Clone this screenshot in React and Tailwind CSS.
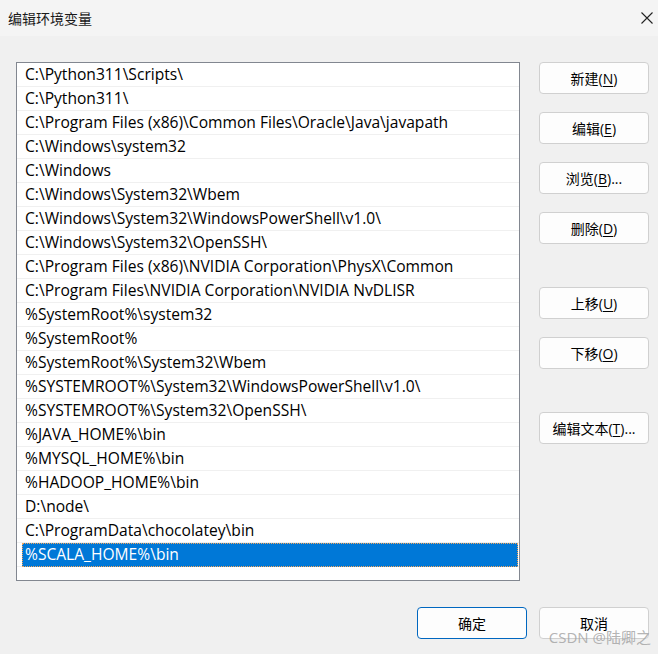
const paths = [
  "C:\\Python311\\Scripts\\",
  "C:\\Python311\\",
  "C:\\Program Files (x86)\\Common Files\\Oracle\\Java\\javapath",
  "C:\\Windows\\system32",
  "C:\\Windows",
  "C:\\Windows\\System32\\Wbem",
  "C:\\Windows\\System32\\WindowsPowerShell\\v1.0\\",
  "C:\\Windows\\System32\\OpenSSH\\",
  "C:\\Program Files (x86)\\NVIDIA Corporation\\PhysX\\Common",
  "C:\\Program Files\\NVIDIA Corporation\\NVIDIA NvDLISR",
  "%SystemRoot%\\system32",
  "%SystemRoot%",
  "%SystemRoot%\\System32\\Wbem",
  "%SYSTEMROOT%\\System32\\WindowsPowerShell\\v1.0\\",
  "%SYSTEMROOT%\\System32\\OpenSSH\\",
  "%JAVA_HOME%\\bin",
  "%MYSQL_HOME%\\bin",
  "%HADOOP_HOME%\\bin",
  "D:\\node\\",
  "C:\\ProgramData\\chocolatey\\bin",
  "%SCALA_HOME%\\bin",
]

const font = "font-['Open_Sans','Noto_Sans_CJK_SC',sans-serif]"

function Btn({ label, keyChar, dots, primary, className = "" }) {
  return (
    <button
      type="button"
      className={
        "flex h-[32px] w-[110px] items-center justify-center rounded-[4px] border bg-[#fdfdfd] text-[14px] text-black " +
        (primary ? "border-[#0067c0] " : "border-[#d0d0d0] ") +
        className
      }
    >
      {label}
      {keyChar && (
        <span>
          (<span className="underline underline-offset-2">{keyChar}</span>){dots ? "..." : ""}
        </span>
      )}
    </button>
  )
}

export default function App() {
  return (
    <div className={"relative h-[654px] w-[658px] overflow-hidden bg-[#f0f0f0] " + font}>
      <div className="flex h-[36px] items-center justify-between bg-[#f4f4f4] pl-[8px] pr-[5px]">
        <span className="text-[14px] text-[#1a1a1a]">编辑环境变量</span>
        <svg width="12" height="12" viewBox="0 0 12 12">
          <path d="M0.5 0.5 L11.5 11.5 M11.5 0.5 L0.5 11.5" stroke="#222" strokeWidth="1.1" />
        </svg>
      </div>

      <div className="flex pl-[16px] pt-[26px]">
        <div className="h-[519px] w-[504px] border border-[#828790] bg-white">
          {paths.map((p, i) => {
            const selected = i === paths.length - 1
            return (
              <div key={i} className="h-[24px] border-b border-[#f0f0f0] pr-[1px]">
                {selected ? (
                  <div className="ml-[5px] flex h-[24px] items-center whitespace-nowrap border border-dotted border-[#f5a65b] bg-[#0078d7] pl-[2px] text-[15.6px] text-white">
                    {p}
                  </div>
                ) : (
                  <div className="flex h-[23px] items-center whitespace-nowrap pl-[8px] text-[15.6px] text-black">{p}</div>
                )}
              </div>
            )
          })}
        </div>

        <div className="ml-[19px] flex flex-col">
          <Btn label="新建" keyChar="N" />
          <Btn label="编辑" keyChar="E" className="mt-[18px]" />
          <Btn label="浏览" keyChar="B" dots className="mt-[18px]" />
          <Btn label="删除" keyChar="D" className="mt-[18px]" />
          <Btn label="上移" keyChar="U" className="mt-[43px]" />
          <Btn label="下移" keyChar="O" className="mt-[18px]" />
          <Btn label="编辑文本" keyChar="T" dots className="mt-[43px]" />
        </div>
      </div>

      <div className="mt-[26px] flex justify-end gap-[12px] pr-[9px]">
        <Btn label="确定" primary />
        <Btn label="取消" />
      </div>

      <div className="pointer-events-none absolute bottom-[6px] right-[7px] text-[15px] text-[#a0a0a0]/80">
        CSDN @陆卿之
      </div>
    </div>
  )
}
